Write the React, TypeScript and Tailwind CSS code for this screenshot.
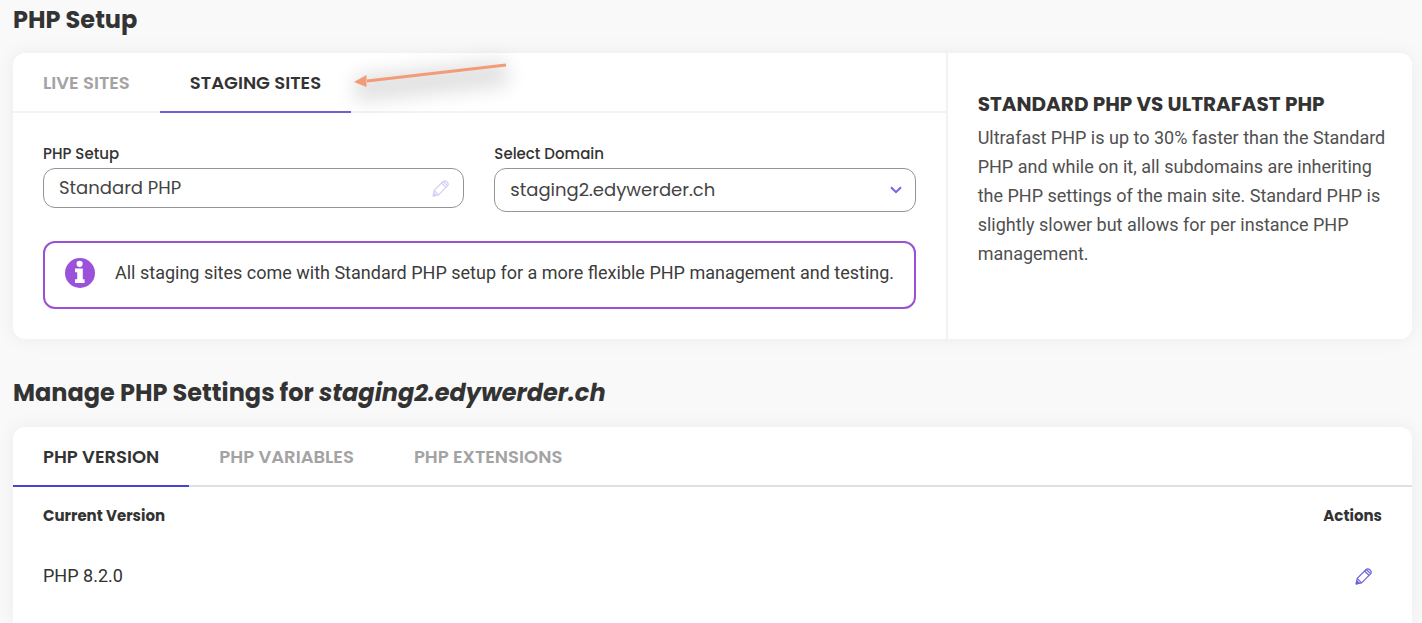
import { useState } from 'react';
import type { ReactNode } from 'react';
import { clsx } from 'clsx';

const SITE_TABS = ['Live Sites', 'Staging Sites'];
const PHP_TABS = ['PHP Version', 'PHP Variables', 'PHP Extensions'];

function PencilIcon({ className }: { className?: string }) {
  return (
    <svg
      viewBox="0 0 18 18"
      fill="none"
      stroke="currentColor"
      strokeWidth="1.2"
      strokeLinejoin="round"
      className={clsx('size-[18px]', className)}
      aria-hidden="true"
    >
      <path d="M1.2 16.8 2.2 11.4 11.1 2.5a2.4 2.4 0 0 1 3.4 0l1 1a2.4 2.4 0 0 1 0 3.4L6.6 15.8Z" />
      <path d="m2.2 11.4 4.4 4.4M9.6 4l4.4 4.4M11.3 2.5l4.2 4.2" />
      <path d="m1.2 16.8.6-3 2.4 2.4Z" fill="currentColor" />
    </svg>
  );
}

function InfoIcon() {
  return (
    <svg viewBox="0 0 30 30" className="size-[30px] shrink-0" aria-hidden="true">
      <circle cx="15" cy="15" r="15" fill="#9b51d9" />
      <circle cx="14.6" cy="5.8" r="3.1" fill="#fff" />
      <path d="M10 10.4h7.8v10.8h1.8v3.8h-9.6v-3.8h2.2v-7h-2.2Z" fill="#fff" />
    </svg>
  );
}

// 指向预发布标签的箭头
function PointerArrow() {
  return (
    <svg
      viewBox="0 0 180 60"
      className="pointer-events-none absolute left-full top-0 h-[60px] w-[180px] overflow-visible"
      aria-hidden="true"
    >
      <g className="blur-[10px]" opacity="0.13">
        <path d="M4 36 156 20" stroke="#000" strokeWidth="24" />
      </g>
      <path d="M16 28 155 12" stroke="#f29b78" strokeWidth="3" />
      <path d="M3 29 15.5 22v12Z" fill="#f29b78" />
    </svg>
  );
}

function Tab({
  label,
  active,
  onClick,
  className,
  children,
}: {
  label: string;
  active: boolean;
  onClick: () => void;
  className?: string;
  children?: ReactNode;
}) {
  return (
    <div className="relative -mb-0.5 flex">
      <button
        type="button"
        role="tab"
        aria-selected={active}
        onClick={onClick}
        className={clsx(
          'cursor-pointer border-b-2 px-[30px] pt-0.5 text-lg font-semibold uppercase',
          active ? 'text-[#333]' : 'border-transparent text-[#a3a3a3]',
          className,
        )}
      >
        {label}
      </button>
      {children}
    </div>
  );
}

function SetupCard() {
  const [tab, setTab] = useState('Staging Sites');

  return (
    <section className="grid grid-cols-3 rounded-xl bg-white shadow-[0_0_20px_rgba(0,0,0,0.06)]">
      <div className="col-span-2">
        <div role="tablist" className="flex h-[60px] border-b-2 border-[#f3f3f3]">
          {SITE_TABS.map((label) => (
            <Tab
              key={label}
              label={label}
              active={tab === label}
              onClick={() => setTab(label)}
              className={tab === label ? 'border-[#6a62d2]' : undefined}
            >
              {label === 'Staging Sites' && <PointerArrow />}
            </Tab>
          ))}
        </div>

        <div className="p-[30px]">
          <div className="grid grid-cols-2 items-start gap-[30px]">
            <div>
              <label htmlFor="php-setup" className="block h-[25px] text-[15px] leading-[22px] font-medium text-[#333]">
                PHP Setup
              </label>
              <div className="flex h-10 items-center rounded-xl border border-[#959595] pr-[13px] pl-[15px]">
                <input
                  id="php-setup"
                  readOnly
                  defaultValue="Standard PHP"
                  className="min-w-0 flex-1 text-lg text-[#444] outline-none"
                />
                <button type="button" aria-label="Edit PHP setup" disabled>
                  <PencilIcon className="text-[#d3cff5]" />
                </button>
              </div>
            </div>

            <div>
              <label htmlFor="domain" className="block h-[25px] text-[15px] leading-[22px] font-medium text-[#333]">
                Select Domain
              </label>
              <div className="relative">
                <select
                  id="domain"
                  className="h-11 w-full appearance-none rounded-xl border border-[#959595] bg-white pr-10 pl-[15px] text-lg text-[#444] outline-none"
                >
                  <option>staging2.edywerder.ch</option>
                </select>
                <svg
                  viewBox="0 0 12 8"
                  fill="none"
                  stroke="#7065e6"
                  strokeWidth="2"
                  className="pointer-events-none absolute top-[18px] right-[14px] h-2 w-3"
                  aria-hidden="true"
                >
                  <path d="m1 1.2 5 5 5-5" />
                </svg>
              </div>
            </div>
          </div>

          <div className="mt-[29px] flex h-[68px] items-center gap-5 rounded-xl border-2 border-[#9b51d4] pr-2 pb-1 pl-5">
            <InfoIcon />
            <p className="font-[Roboto,sans-serif] text-lg text-[#3c3c3c]">
              All staging sites come with Standard PHP setup for a more flexible PHP management and testing.
            </p>
          </div>
        </div>
      </div>

      <aside className="border-l-2 border-[#f2f2f2] pt-9 pr-5 pl-[30px]">
        <h3 className="text-xl leading-[30px] font-bold text-[#333] uppercase">Standard PHP vs Ultrafast PHP</h3>
        <p className="mt-1 font-[Roboto,sans-serif] text-lg leading-[29px] text-[#505050]">
          Ultrafast PHP is up to 30% faster than the Standard PHP and while on it, all subdomains are inheriting the
          PHP settings of the main site. Standard PHP is slightly slower but allows for per instance PHP management.
        </p>
      </aside>
    </section>
  );
}

function VersionCard() {
  const [tab, setTab] = useState('PHP Version');

  return (
    <section className="flex-1 rounded-t-xl bg-white shadow-[0_0_20px_rgba(0,0,0,0.06)]">
      <div role="tablist" className="flex h-[60px] border-b-2 border-[#e0e0e0]">
        {PHP_TABS.map((label) => (
          <Tab
            key={label}
            label={label}
            active={tab === label}
            onClick={() => setTab(label)}
            className={tab === label ? 'border-[#4a42d4]' : undefined}
          />
        ))}
      </div>

      <table className="w-full text-[#333]">
        <thead>
          <tr className="h-[58px] text-[15px]">
            <th className="pl-[30px] text-left font-bold">Current Version</th>
            <th className="pr-[30px] text-right font-bold">Actions</th>
          </tr>
        </thead>
        <tbody>
          <tr className="h-[62px]">
            <td className="pl-[30px] font-[Roboto,sans-serif] text-lg">PHP 8.2.0</td>
            <td className="pr-[39px]">
              <button type="button" aria-label="Edit PHP version" className="ml-auto block cursor-pointer">
                <PencilIcon className="text-[#6a5fe0]" />
              </button>
            </td>
          </tr>
        </tbody>
      </table>
    </section>
  );
}

export default function App() {
  return (
    <main className="flex min-h-screen flex-col bg-[#f9f9f9] pt-0.5 pr-[10px] pl-[13px] font-[Poppins,Inter,sans-serif]">
      <h1 className="mb-[15px] text-2xl leading-9 font-bold text-[#333]">PHP Setup</h1>
      <SetupCard />
      <h2 className="mt-9 mb-4 text-2xl leading-9 font-bold text-[#333]">
        Manage PHP Settings for <em>staging2.edywerder.ch</em>
      </h2>
      <VersionCard />
    </main>
  );
}
